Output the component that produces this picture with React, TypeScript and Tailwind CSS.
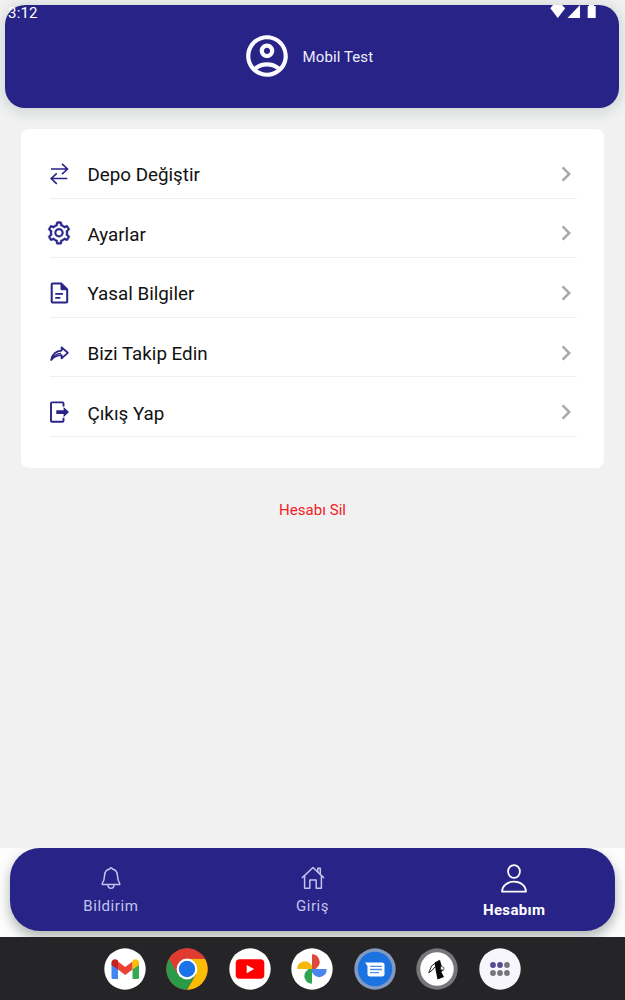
import type { ReactNode } from "react"
import { AiOutlineSetting } from "react-icons/ai"
import { MdChevronRight, MdOutlineAccountCircle } from "react-icons/md"

interface MenuItem {
  label: string
  icon: ReactNode
}

interface TabProps {
  label: string
  icon: ReactNode
  active?: boolean
}

const SwapIcon = () => (
  <svg width="24" height="24" viewBox="0 0 24 24" fill="none" stroke="currentColor" strokeWidth="1.6">
    <path d="M4 7h16.5M15 1.8L20.500 7 15 12.200M20.300 16.500H4.200M9.800 11.400l-5.600 5.100 5.600 5.300" />
  </svg>
)

const FileIcon = () => (
  <svg width="24" height="24" viewBox="0 0 24 24" fill="none" stroke="currentColor" strokeWidth="2" strokeLinejoin="round">
    <path d="M14.2 2.500H5.600a.9.9 0 0 0-.9.9v17.200c0 .5.4.9.9.9h13.700c.5 0 .9-.4.9-.9V8.500z" />
    <path d="M14 2.500v6.200h6.200z" fill="currentColor" strokeWidth="1" />
    <path d="M8.300 12.800h7.700M8.300 16.800h5.100" strokeWidth="1.700" />
  </svg>
)

const ShareIcon = () => (
  <svg width="24" height="24" viewBox="0 0 24 24" fill="none" stroke="currentColor" strokeWidth="1.8" strokeLinejoin="round">
    <path d="M14.600 6.400v3.200C8.600 9.800 5.400 13 4.200 19c2.700-3.500 6-4.800 10.400-4.900v3.200l6.200-5.500z" />
    <path d="M4.500 18.500c2.200-4.200 5.500-6 9.500-6.200" strokeWidth="1.3" />
  </svg>
)

const LogoutIcon = () => (
  <svg width="24" height="24" viewBox="0 0 24 24" fill="none" stroke="currentColor" strokeWidth="1.9" strokeLinejoin="round">
    <path d="M16.500 6.500V3.400a1 1 0 0 0-1-1H5a1 1 0 0 0-1 1v17.400a1 1 0 0 0 1 1h10.500a1 1 0 0 0 1-1v-3" />
    <path d="M9.300 10.200h7.300V7l5.400 5.100-5.400 5.100V14H9.300z" fill="currentColor" stroke="none" />
  </svg>
)

const BellIcon = () => (
  <svg width="24" height="24" viewBox="0 0 24 24" fill="none" stroke="currentColor" strokeWidth="1.5" strokeLinejoin="round">
    <path d="M12 1.700c.8 0 1.200.5 1.300 1.200 3.200.6 4.900 3 5.100 6.300.2 4 .8 6 2.200 7.900.5.700.2 1.500-.7 1.500H4.100c-.9 0-1.200-.8-.7-1.500 1.400-1.900 2-3.900 2.200-7.900.2-3.300 1.900-5.700 5.100-6.300.1-.7.5-1.200 1.300-1.200z" />
    <path d="M8.800 18.800c.2 2.300 1.500 3.500 3.200 3.500s3-1.200 3.200-3.500" />
  </svg>
)

const HomeIcon = () => (
  <svg width="24" height="24" viewBox="0 0 24 24" fill="none" stroke="currentColor" strokeWidth="1.5" strokeLinejoin="round" strokeLinecap="round">
    <path d="M1.400 11.600L12 1.500l10.600 10.100" />
    <path d="M3.600 9.800v12.500h5.200v-8.200h6.400v8.200h5.200V9.800" />
    <path d="M16.800 5.800V2.300h2.500V8" />
  </svg>
)

const UserIcon = () => (
  <svg width="28" height="30" viewBox="0 0 28 30" fill="none" stroke="currentColor" strokeWidth="1.800" strokeLinejoin="round">
    <ellipse cx="14" cy="8.500" rx="5.900" ry="6.400" />
    <path d="M2.100 28.700h23.800c.2-5.500-5-10-11.900-10s-12.100 4.500-11.900 10z" />
  </svg>
)

const menuItems: MenuItem[] = [
  { label: "Depo Değiştir", icon: <SwapIcon /> },
  { label: "Ayarlar", icon: <AiOutlineSetting size={26} strokeWidth={18} className="-m-px" /> },
  { label: "Yasal Bilgiler", icon: <FileIcon /> },
  { label: "Bizi Takip Edin", icon: <ShareIcon /> },
  { label: "Çıkış Yap", icon: <LogoutIcon /> },
]

function StatusBar() {
  return (
    <div className="absolute inset-x-0 top-0 z-10 flex h-6 items-start justify-between pl-2 pr-[28px] pt-[5px] text-white">
      <span className="text-[15px] leading-4 tracking-[0.2px]">3:12</span>
      <svg width="48" height="14" viewBox="0 0 48 14" fill="currentColor">
        <path d="M4 0h9l3.200 3.300L8.800 13 1.300 3.300z" />
        <path d="M31 0v13H18.500z" />
        <path d="M40 1V0h5v1h1.700v12h-8V1z" />
      </svg>
    </div>
  )
}

function MenuRow({ label, icon }: MenuItem) {
  return (
    <div className="flex h-[59.6px] items-center pl-[26px] pr-[23px] pt-[10px]">
      <span className="text-[#282387]">{icon}</span>
      <span className="ml-[16.5px] mt-[3px] flex-1 text-[18.8px] leading-6 text-[#111]">{label}</span>
      <MdChevronRight size={30} className="text-[#a9a9a9]" />
    </div>
  )
}

function Tab({ label, icon, active }: TabProps) {
  return (
    <div className={`flex flex-1 flex-col items-center ${active ? "pt-[15px] text-white" : "pt-[18px] text-[#c3c3ee]"}`}>
      {icon}
      <span className={active ? "mt-[7px] text-[15px] font-bold leading-5 tracking-[0.35px]" : "mt-[6px] text-[15px] leading-5 tracking-[0.55px]"}>
        {label}
      </span>
    </div>
  )
}

/* Android dock */
function Dock() {
  return (
    <div className="flex h-[63px] items-center justify-center gap-[20.5px] bg-[#252528] pr-px">
      <svg width="42" height="42" viewBox="0 0 42 42">
        <circle cx="21" cy="21" r="20.7" fill="#fff" />
        <path d="M7.500 15v14.500c0 1 .7 1.500 1.500 1.500h5V18z" fill="#4285f4" />
        <path d="M28.500 18v13h5c.9 0 1.500-.6 1.500-1.500V15z" fill="#34a853" />
        <path d="M14 13.500l7.200 5.600 7.300-5.600v8L21.200 27 14 21.500z" fill="#ea4335" />
        <path d="M7.500 17v-2c0-3.600 3.600-4.800 6.500-2.500v9z" fill="#c5221f" />
        <path d="M28.500 21.500v-9c3-2.300 6.500-1 6.500 2.500v2z" fill="#fbbc04" />
      </svg>
      <svg width="42" height="42" viewBox="0 0 42 42">
        <circle cx="21" cy="21" r="20.7" fill="#ea4335" />
        <path d="M21 10.700h17.900A20.700 20.700 0 0 1 21 41.700l9-15.500z" fill="#fbbc04" />
        <path d="M3.100 10.700A20.700 20.700 0 0 0 21 41.700l9-15.500H12z" fill="#2b9b48" />
        <path d="M21 10.700h17.900a20.700 20.700 0 0 0-35.800 0L12 26.200z" fill="#df3b30" />
        <circle cx="21" cy="21" r="10.400" fill="#fff" />
        <circle cx="21" cy="21" r="8.2" fill="#1a73e8" />
      </svg>
      <svg width="42" height="42" viewBox="0 0 42 42">
        <circle cx="21" cy="21" r="20.7" fill="#fff" />
        <rect x="6.700" y="11.300" width="28.600" height="19.500" rx="4" fill="#f00" />
        <path d="M17.700 17v8.200l7.400-4.100z" fill="#fff" />
      </svg>
      <svg width="42" height="42" viewBox="0 0 42 42">
        <circle cx="21" cy="21" r="20.7" fill="#fff" />
        <path d="M21 21V6.300a7.600 7.600 0 0 1 5 13.300L24.500 21z" fill="#df4a3b" />
        <path d="M21 21h14.500a7.300 7.300 0 0 1-13.200 5L21 24.500z" fill="#4a86ea" />
        <path d="M21 21v14.700a7.600 7.600 0 0 1-5-13.300l1.500-1.400z" fill="#30a453" />
        <path d="M21 21H6.300a7.500 7.500 0 0 1 13.300-5l1.400 1.500z" fill="#f6b70a" />
      </svg>
      <svg width="42" height="42" viewBox="0 0 42 42">
        <circle cx="21" cy="21" r="20.7" fill="#8299c0" />
        <circle cx="21" cy="21" r="17.3" fill="#1a73e0" />
        <path d="M11 14.500h17a2.500 2.500 0 0 1 2.500 2.500v9a2.500 2.500 0 0 1-2.500 2.500H16a2.500 2.500 0 0 1-2.500-2.500v-8z" fill="#fff" />
        <path d="M16 18.300h12M16 21.500h12M16 24.700h9" stroke="#4c91e8" strokeWidth="1.3" />
      </svg>
      <svg width="42" height="42" viewBox="0 0 42 42">
        <circle cx="21" cy="21" r="20.7" fill="#77777b" />
        <circle cx="21" cy="21" r="16.7" fill="#fff" />
        <path d="M18.500 14.500l5.500-2.500 1.500 5.500 1.500 5-1.700 1.500 2.700 5-6.500 2.500-1.700-8.500z" fill="#08080c" />
        <path d="M23 12.500L15.500 18 12.800 24.800l3.400-2.600 3-3.700" fill="none" stroke="#222" strokeWidth="1" />
        <path d="M25 17.800l3.200 2-.7 2.500-3-.7z" fill="#fff" stroke="#222" strokeWidth=".7" />
      </svg>
      <svg width="42" height="42" viewBox="0 0 42 42">
        <circle cx="21" cy="21" r="20.7" fill="#f8f6fd" />
        <g fill="#77737e">
          <circle cx="14" cy="17" r="2.9" fill="#514c91" />
          <circle cx="21" cy="17" r="2.9" fill="#514c91" />
          <circle cx="28" cy="17" r="2.9" />
          <circle cx="14" cy="25" r="2.9" />
          <circle cx="21" cy="25" r="2.9" />
          <circle cx="28" cy="25" r="2.9" />
        </g>
      </svg>
    </div>
  )
}

export default function App() {
  return (
    <div className="relative flex h-[1000px] w-[625px] flex-col overflow-hidden bg-[#f1f1f2] font-['Roboto',sans-serif]">
      <StatusBar />

      <header className="ml-[5.3px] mr-[5.6px] mt-[5.3px] flex h-[102.3px] shrink-0 items-center justify-center rounded-[20px] bg-[#282387] pr-[10px] shadow-[0_2px_12px_3px_rgba(120,145,130,0.25)]">
        <MdOutlineAccountCircle size={50} className="text-[#fafaff]" />
        <span className="ml-[11px] mt-[2px] text-[15px] tracking-[0.1px] text-[#eeeefa]">Mobil Test</span>
      </header>

      <main className="flex flex-1 flex-col items-center pt-[21.4px]">
        <section className="h-[339px] w-[583px] rounded-lg bg-white pt-[10px]">
          {menuItems.map((item) => (
            <div key={item.label}>
              <MenuRow {...item} />
              <div className="-mt-px ml-[29px] mr-[27px] h-px bg-[#efeff0]" />
            </div>
          ))}
        </section>
        <button className="mt-[32px] text-[15px] leading-5 tracking-[0.05px] text-[#f2201f]">Hesabı Sil</button>
      </main>

      <div className="h-[89px] shrink-0 overflow-hidden bg-[#fdfdfd] px-[10px]">
        <nav className="flex h-[82.5px] rounded-[30px] bg-[#282387] shadow-[0_6px_12px_1px_rgba(60,70,65,0.36)]">
          <Tab label="Bildirim" icon={<BellIcon />} />
          <Tab label="Giriş" icon={<HomeIcon />} />
          <Tab label="Hesabım" icon={<UserIcon />} active />
        </nav>
      </div>

      <Dock />
    </div>
  )
}
